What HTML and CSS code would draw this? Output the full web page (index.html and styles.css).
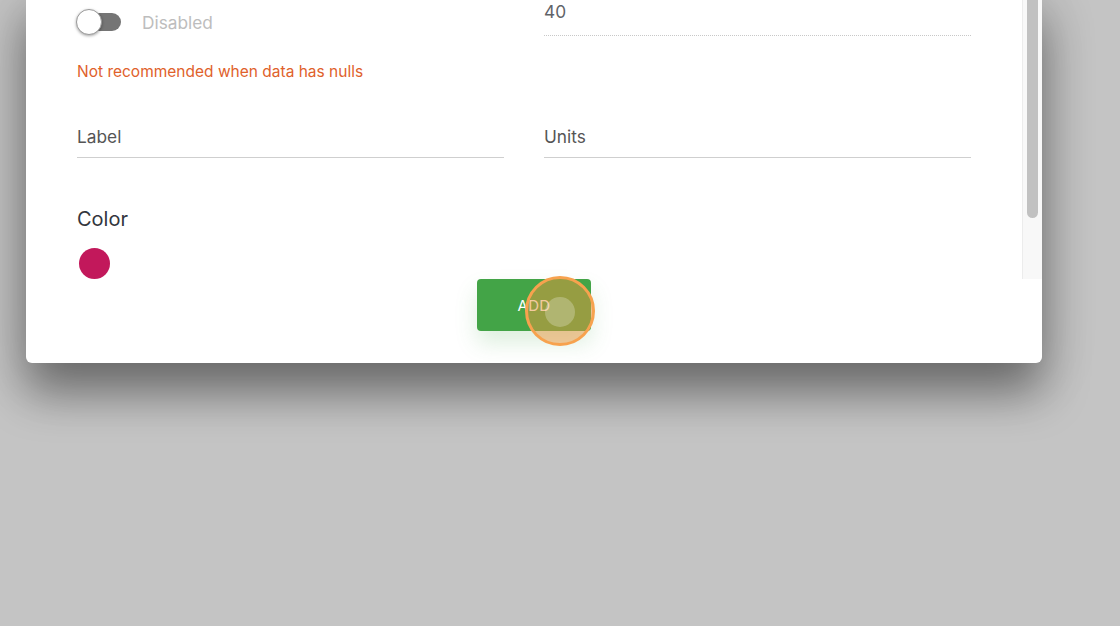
FILE: index.html
```html
<!DOCTYPE html>
<html lang="en">
<head>
  <meta charset="UTF-8" />
  <title>Add series</title>
  <link rel="stylesheet" href="styles.css">
</head>
<body>

<div class="dialog">
  <div class="scroll">
    <div class="fields">

      <div class="row">
        <div class="switch-row">
          <span class="switch"><span class="knob"></span></span>
          <span class="switch-label">Disabled</span>
        </div>
        <div class="field dotted">40</div>
      </div>

      <div class="hint">Not recommended when data has nulls</div>

      <div class="row row-inputs">
        <div class="field">Label</div>
        <div class="field">Units</div>
      </div>

      <div class="heading">Color</div>
      <div class="swatch"></div>

    </div>
    <div class="track"><div class="thumb"></div></div>
  </div>

  <div class="actions">
    <button class="btn">ADD</button>
    <span class="touch"><span class="touch-dot"></span></span>
  </div>
</div>

</body>
</html>
```

FILE: styles.css
```css
* { box-sizing: border-box; margin: 0; padding: 0; }

body {
  font-family: Inter, "Liberation Sans", sans-serif;
  background: #c4c4c4;
  height: 626px;
  overflow: hidden;
}

.dialog {
  width: 1016px;
  margin: -10px 0 0 26px;
  background: #fff;
  border-radius: 6px;
  box-shadow: 0 30px 46px rgba(0,0,0,0.4), 0 10px 60px rgba(0,0,0,0.14);
}

.scroll {
  display: flex;
  height: 289px;
  overflow: hidden;
}

.fields {
  flex: 1;
  padding: 10px 51px 0;
}

.track {
  width: 20px;
  background: #f8f8f8;
  border-left: 1px solid #ececec;
  padding: 0 4px 0 4px;
}

.thumb {
  height: 228px;
  background: #c1c1c1;
  border-radius: 0 0 6px 6px;
}

.row {
  display: grid;
  grid-template-columns: 1fr 1fr;
  gap: 40px;
}

.switch-row {
  display: flex;
  align-items: center;
  gap: 21px;
  margin-top: 10px;
  height: 24px;
}

.switch {
  position: relative;
  width: 44px;
  height: 18px;
  background: #757575;
  border-radius: 9px;
}

.knob {
  position: absolute;
  left: -1px;
  top: -4px;
  width: 26px;
  height: 26px;
  border-radius: 50%;
  background: #fff;
  border: 1px solid #9a9a9a;
  box-shadow: 0 1px 3px rgba(0,0,0,0.35);
}

.switch-label {
  font-size: 17.3px;
  color: #bdbdbd;
}

.field {
  font-size: 17.3px;
  line-height: 24px;
  color: #555;
  padding-bottom: 8px;
  border-bottom: 1px solid #cfcfcf;
}

.field.dotted {
  color: #5f6368;
  padding-bottom: 11px;
  border-bottom: 1px dotted #c8c8c8;
}

.hint {
  font-size: 15.5px;
  line-height: 20px;
  color: #e0612b;
  margin-top: 26px;
}

.row-inputs { margin-top: 43px; }

.heading {
  font-size: 20px;
  line-height: 28px;
  color: #33363d;
  margin-top: 47px;
}

.swatch {
  width: 31px;
  height: 31px;
  border-radius: 50%;
  background: #c2185b;
  margin: 15px 0 0 2px;
}

.actions {
  position: relative;
  display: flex;
  justify-content: center;
  padding: 0 0 32px;
}

.btn {
  width: 114px;
  height: 52px;
  background: #43a447;
  color: #fff;
  border: none;
  border-radius: 4px;
  font-family: Inter, "Liberation Sans", sans-serif;
  font-size: 15px;
  letter-spacing: 0.3px;
  box-shadow: 0 12px 22px rgba(67,164,71,0.18);
}

.touch {
  position: absolute;
  left: 499px;
  top: -3px;
  width: 70px;
  height: 70px;
  border-radius: 50%;
  border: 3px solid #f7a24e;
  background: rgba(234,150,62,0.5);
}

.touch-dot {
  position: absolute;
  left: 17px;
  top: 18px;
  width: 30px;
  height: 30px;
  border-radius: 50%;
  background: rgba(255,255,255,0.25);
}
```
